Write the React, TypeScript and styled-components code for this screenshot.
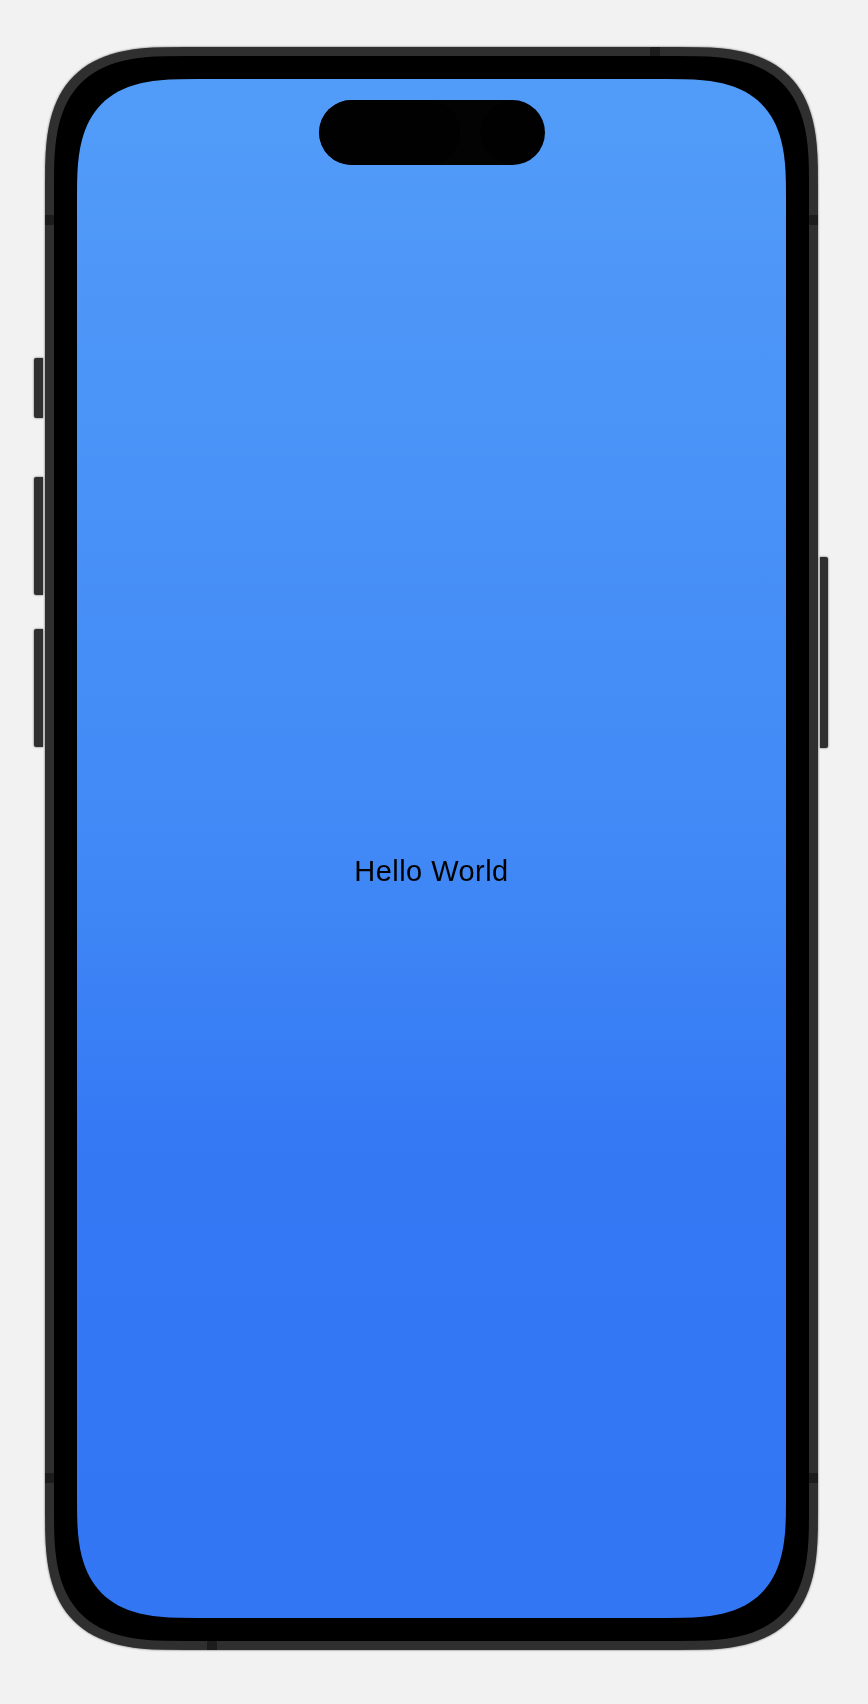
import React from "react";
import styled, { createGlobalStyle } from "styled-components";

const GlobalStyle = createGlobalStyle`
  html, body {
    margin: 0;
    padding: 0;
    background: #f2f2f2;
  }
  body {
    font-family: "Liberation Sans", Arial, sans-serif;
  }
`;

/* continuous-corner (superellipse) outline, computed once */
function squircle(w: number, h: number, r: number, n = 3): string {
  const steps = 28;
  const pts: string[] = [];
  const e = 2 / n;
  const corner = (cx: number, cy: number, sx: number, sy: number, from: number, to: number) => {
    for (let i = 0; i <= steps; i++) {
      const t = from + ((to - from) * i) / steps;
      const x = cx + sx * r * Math.pow(Math.max(Math.cos(t), 0), e);
      const y = cy + sy * r * Math.pow(Math.max(Math.sin(t), 0), e);
      pts.push(`${x.toFixed(2)} ${y.toFixed(2)}`);
    }
  };
  const H = Math.PI / 2;
  corner(w - r, r, 1, -1, H, 0);
  corner(w - r, h - r, 1, 1, 0, H);
  corner(r, h - r, -1, 1, H, 0);
  corner(r, r, -1, -1, 0, H);
  return `path('M ${pts.join(" L ")} Z')`;
}

const FRAME_W = 773;
const FRAME_H = 1603;
const RIM = 9;
const BEZEL = 23;

const frameClip = squircle(FRAME_W, FRAME_H, 140);
const bezelClip = squircle(FRAME_W - 2 * RIM, FRAME_H - 2 * RIM, 131);
const screenClip = squircle(FRAME_W - 2 * RIM - 2 * BEZEL, FRAME_H - 2 * RIM - 2 * BEZEL, 120);

const Page = styled.div`
  width: 868px;
  height: 1704px;
  box-sizing: border-box;
  padding: 47px 0 0 34px;
  background: #f2f2f2;
`;

const Device = styled.div`
  display: flex;
  align-items: flex-start;
  filter: drop-shadow(0 0 0.8px rgba(0, 0, 0, 0.55));
`;

const ButtonRail = styled.div<{ $side: "left" | "right" }>`
  display: flex;
  flex-direction: column;
  width: ${(p) => (p.$side === "left" ? 9 : 8)}px;
  margin: ${(p) => (p.$side === "left" ? "0 2px 0 0" : "0 0 0 2px")};
`;

const HardButton = styled.div<{ $side: "left" | "right"; $offset: number; $length: number }>`
  margin-top: ${(p) => p.$offset}px;
  height: ${(p) => p.$length}px;
  background: #2f2f2f;
  border-radius: ${(p) => (p.$side === "left" ? "2px 0 0 2px" : "0 2px 2px 0")};
`;

const mark = "linear-gradient(#1c1c1c, #1c1c1c)";

const Frame = styled.div`
  flex: none;
  width: ${FRAME_W}px;
  height: ${FRAME_H}px;
  box-sizing: border-box;
  padding: ${RIM}px;
  clip-path: ${frameClip};
  background-color: #2f2f2f;
  background-image: ${mark}, ${mark}, ${mark}, ${mark}, ${mark}, ${mark};
  background-repeat: no-repeat;
  background-size: 10px 9px, 10px 9px, 9px 10px, 9px 10px, 9px 10px, 9px 10px;
  background-position:
    605px 0,
    162px ${FRAME_H - 9}px,
    0 168px,
    ${FRAME_W - 9}px 168px,
    0 1426px,
    ${FRAME_W - 9}px 1426px;
`;

const Bezel = styled.div`
  width: 100%;
  height: 100%;
  box-sizing: border-box;
  padding: ${BEZEL}px;
  clip-path: ${bezelClip};
  background: #000;
`;

const Screen = styled.div`
  width: 100%;
  height: 100%;
  clip-path: ${screenClip};
  background: linear-gradient(180deg, #529cf9 0%, #4189f6 50%, #3478f4 70%, #3276f4 100%);
  display: flex;
  flex-direction: column;
  align-items: center;
  box-sizing: border-box;
  padding: 21px 0 61px;
`;

const Island = styled.div`
  flex: none;
  width: 226px;
  height: 65px;
  border-radius: 33px;
  background: #030303;
  display: flex;
  align-items: center;
  justify-content: space-between;
  overflow: hidden;
`;

const IslandSensor = styled.div`
  width: 141px;
  height: 65px;
  border-radius: 33px;
  background: #010101;
`;

const IslandCamera = styled.div`
  width: 63px;
  height: 63px;
  border-radius: 50%;
  background: #010101;
  margin-right: 1px;
`;

const SafeArea = styled.div`
  flex: 1;
  align-self: stretch;
  margin-top: 21px;
  display: flex;
  align-items: center;
  justify-content: center;
`;

const Greeting = styled.span`
  font-family: "Liberation Sans", Arial, sans-serif;
  font-size: 29px;
  letter-spacing: 0.45px;
  color: #000;
`;

export default function App() {
  return (
    <>
      <GlobalStyle />
      <Page>
        <Device>
          <ButtonRail $side="left">
            <HardButton $side="left" $offset={311} $length={60} />
            <HardButton $side="left" $offset={59} $length={118} />
            <HardButton $side="left" $offset={34} $length={118} />
          </ButtonRail>
          <Frame>
            <Bezel>
              <Screen>
                <Island>
                  <IslandSensor />
                  <IslandCamera />
                </Island>
                <SafeArea>
                  <Greeting>Hello World</Greeting>
                </SafeArea>
              </Screen>
            </Bezel>
          </Frame>
          <ButtonRail $side="right">
            <HardButton $side="right" $offset={510} $length={191} />
          </ButtonRail>
        </Device>
      </Page>
    </>
  );
}
